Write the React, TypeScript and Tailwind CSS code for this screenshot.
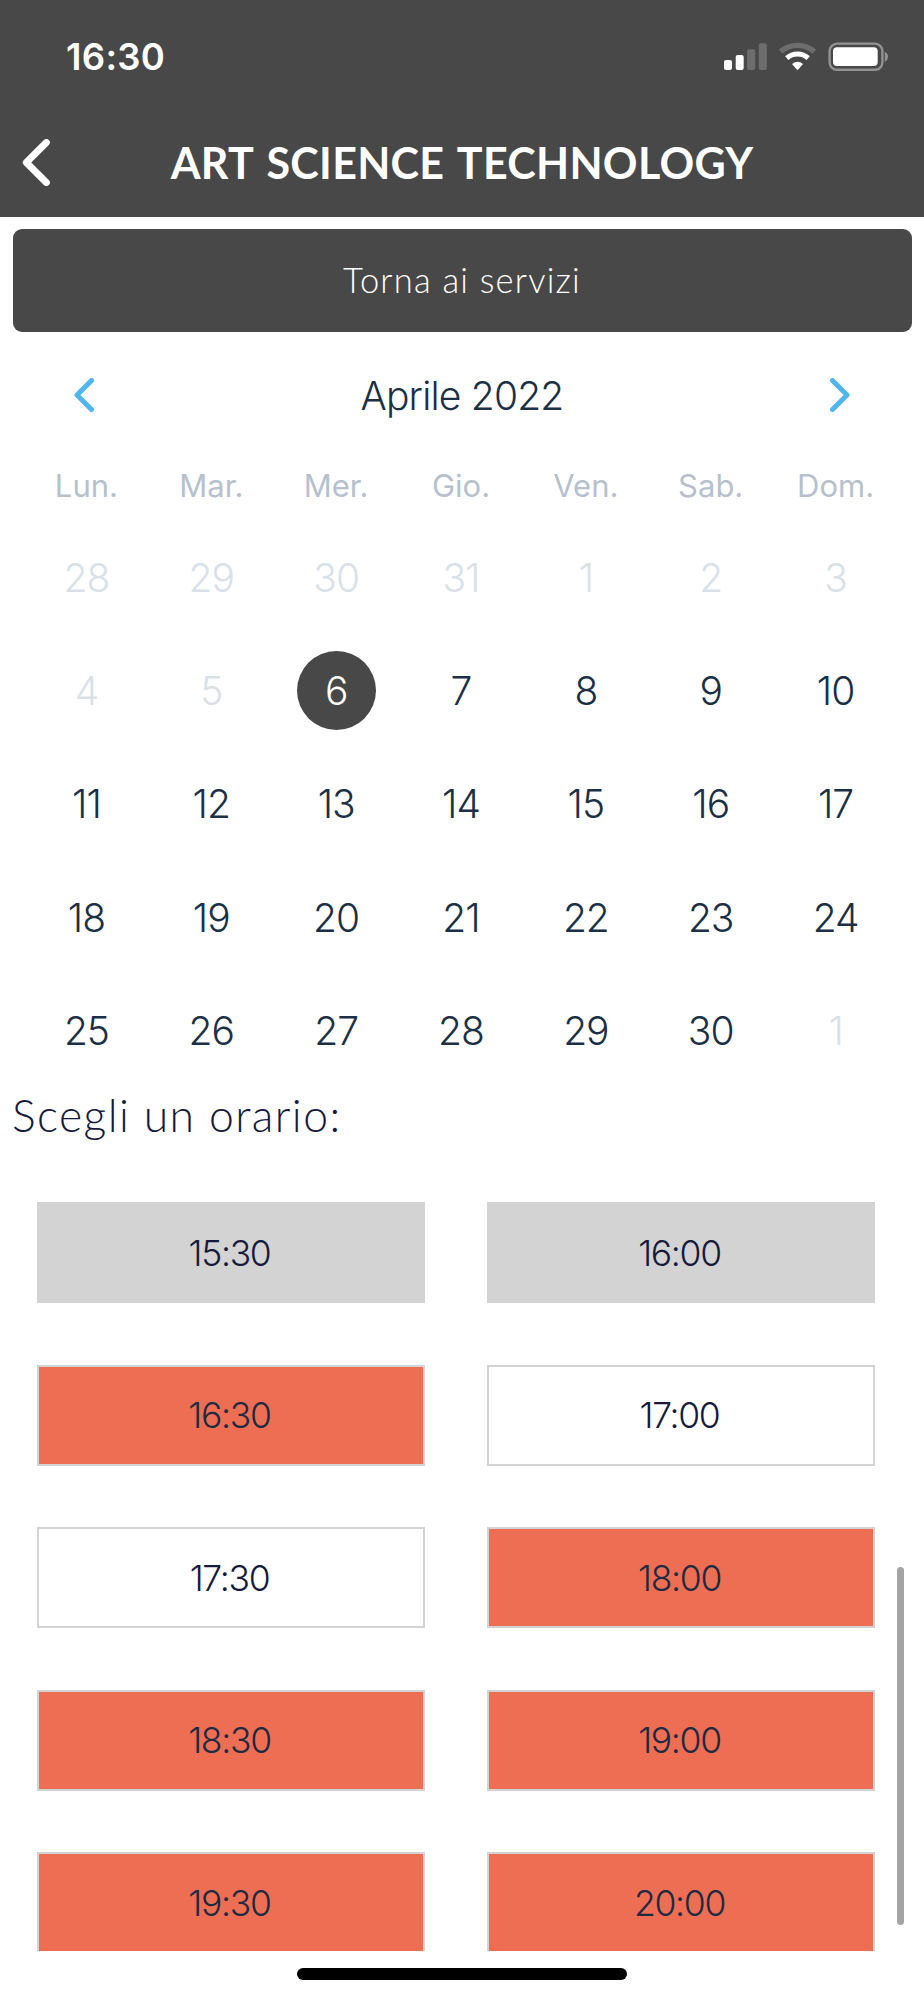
import clsx from "clsx";

type DayState = "disabled" | "selected" | "available";
type SlotState = "past" | "busy" | "free";

const WEEKDAYS = ["Lun.", "Mar.", "Mer.", "Gio.", "Ven.", "Sab.", "Dom."];

const WEEKS = [
  [28, 29, 30, 31, 1, 2, 3],
  [4, 5, 6, 7, 8, 9, 10],
  [11, 12, 13, 14, 15, 16, 17],
  [18, 19, 20, 21, 22, 23, 24],
  [25, 26, 27, 28, 29, 30, 1],
];

const SLOTS: { time: string; state: SlotState }[] = [
  { time: "15:30", state: "past" },
  { time: "16:00", state: "past" },
  { time: "16:30", state: "busy" },
  { time: "17:00", state: "free" },
  { time: "17:30", state: "free" },
  { time: "18:00", state: "busy" },
  { time: "18:30", state: "busy" },
  { time: "19:00", state: "busy" },
  { time: "19:30", state: "busy" },
  { time: "20:00", state: "busy" },
];

function dayState(week: number, index: number): DayState {
  if (week === 1 && index === 2) return "selected";
  if (week === 0 || (week === 1 && index < 2) || (week === 4 && index === 6)) return "disabled";
  return "available";
}

function StatusIcons() {
  return (
    <svg width={168} height={32} viewBox="0 0 168 32" aria-hidden="true">
      {/* Signal */}
      <rect x="4" y="19" width="8" height="10" rx="2" fill="#fff" />
      <rect x="15.7" y="14" width="8" height="15" rx="2" fill="#fff" />
      <rect x="27.2" y="8.3" width="8" height="20.7" rx="2" fill="#6d6d6d" />
      <rect x="38.8" y="2.3" width="8" height="26.7" rx="2" fill="#6d6d6d" />
      {/* Wi-Fi */}
      <path d="M60.6 10.6 A26 26 0 0 1 94.4 10.6" fill="none" stroke="#6d6d6d" strokeWidth="5.2" />
      <path d="M66.8 17.2 A16 16 0 0 1 88.2 17.2" fill="none" stroke="#fff" strokeWidth="5" />
      <path d="M72 23 Q77.5 18.4 83 23 L78.4 28.2 Q77.5 29.2 76.6 28.2Z" fill="#fff" />
      {/* Battery */}
      <rect x="109.6" y="2.6" width="52.8" height="26.2" rx="7.5" fill="none" stroke="#929292" strokeWidth="2.4" />
      <rect x="113" y="6.3" width="44.7" height="18.7" rx="4" fill="#fff" />
      <path d="M164.8 10.8 Q168.5 13 168 16 Q168 19 164.8 21Z" fill="#929292" />
    </svg>
  );
}

function Chevron({ direction, className }: { direction: "left" | "right"; className?: string }) {
  return (
    <svg
      viewBox="0 0 20 34"
      fill="none"
      stroke="currentColor"
      strokeWidth={5}
      strokeLinecap="round"
      strokeLinejoin="round"
      className={clsx(className, direction === "right" && "rotate-180")}
      aria-hidden="true"
    >
      <path d="M17.5 2.5 3 17l14.5 14.5" />
    </svg>
  );
}

function Header() {
  return (
    <header className="h-[217px] bg-[#484848] text-white">
      <div className="flex h-[114px] items-center justify-between pr-[36px] pl-[66px]">
        <span className="font-['Inter',sans-serif] text-[36.5px] leading-none font-semibold tracking-[0.3px]">
          16:30
        </span>
        <StatusIcons />
      </div>
      <div className="flex h-[96px] items-center">
        <button type="button" aria-label="Indietro" className="w-[74px] pl-[22px]">
          <Chevron direction="left" className="h-[47px] w-[28px]" />
        </button>
        <h1 className="flex-1 pr-[74px] text-center text-[43px] leading-none font-bold tracking-[0.3px] whitespace-nowrap [word-spacing:3px]">
          ART SCIENCE TECHNOLOGY
        </h1>
      </div>
    </header>
  );
}

function Calendar() {
  return (
    <section className="font-['Inter',sans-serif] text-[#1c3045]">
      <div className="flex h-[127px] items-center justify-between px-[73px]">
        <button type="button" aria-label="Mese precedente" className="text-[#50b7ee]">
          <Chevron direction="left" className="h-[34px] w-[22px]" />
        </button>
        <h2 className="text-[39px] leading-none font-[260] tracking-[-0.8px]">Aprile 2022</h2>
        <button type="button" aria-label="Mese successivo" className="text-[#50b7ee]">
          <Chevron direction="right" className="h-[34px] w-[22px]" />
        </button>
      </div>
      <div className="grid h-[62px] grid-cols-7 items-center pr-[26px] pb-[8px] pl-[24px] text-center text-[31px] leading-none font-normal text-[#b6c1cd]">
        {WEEKDAYS.map((day) => (
          <span key={day}>{day}</span>
        ))}
      </div>
      {WEEKS.map((week, w) => (
        <div key={w} className="grid h-[113.4px] grid-cols-7 items-center pr-[26px] pl-[24px]">
          {week.map((day, i) => {
            const state = dayState(w, i);
            return (
              <button
                key={i}
                type="button"
                className={clsx(
                  "flex size-[79px] items-center justify-center justify-self-center rounded-full text-[39px] leading-none font-[260] tracking-[-1px]",
                  state === "selected" && "bg-[#484848] text-white",
                  state === "disabled" && "text-[#d9e1e8]",
                )}
              >
                {day}
              </button>
            );
          })}
        </div>
      ))}
    </section>
  );
}

function SlotGrid() {
  return (
    <div className="grid h-[749px] auto-rows-[101px] grid-cols-2 gap-x-[62px] gap-y-[61.6px] overflow-hidden pr-[49px] pl-[37px]">
      {SLOTS.map((slot) => (
        <button
          key={slot.time}
          type="button"
          className={clsx(
            "border-[2.5px] border-[#d3d3d3] pt-[2px] pr-[3px] font-['Inter',sans-serif] text-[35.5px] leading-none font-[260] tracking-[-1.3px]",
            slot.state === "past" && "bg-[#d3d3d3] text-[#161a3a]",
            slot.state === "busy" && "bg-[#ed6e52] text-[#1c2a42]",
            slot.state === "free" && "bg-white text-[#161a3a]",
          )}
        >
          {slot.time}
        </button>
      ))}
    </div>
  );
}

export default function App() {
  return (
    <div className="relative h-[2000px] w-[924px] overflow-hidden bg-white font-['Lato',sans-serif]">
      <Header />
      <div className="px-[12.5px] pt-[12px]">
        <button
          type="button"
          className="h-[102.5px] w-full rounded-[9px] bg-[#484848] text-[34.5px] leading-none font-light tracking-[1.2px] text-white"
        >
          Torna ai servizi
        </button>
      </div>
      <Calendar />
      <h3 className="flex h-[114.5px] items-center px-[12px] pb-[59px] text-[44.5px] leading-none font-light tracking-[1.4px] text-[#161a3a]">
        Scegli un orario:
      </h3>
      <SlotGrid />
      <div className="absolute top-[1567px] right-[20px] h-[358px] w-[7.5px] rounded-full bg-[#a4a4a4]" />
      <div className="mx-auto mt-[17px] h-[12px] w-[330px] rounded-full bg-black" />
    </div>
  );
}
